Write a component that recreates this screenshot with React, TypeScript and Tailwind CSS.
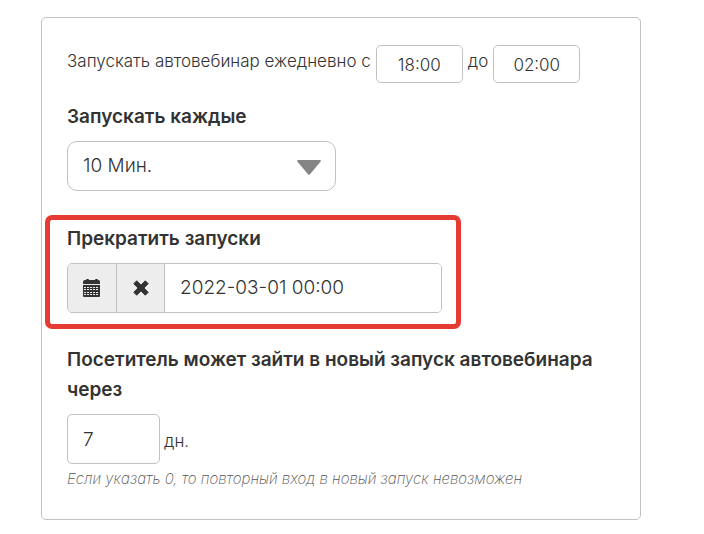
import { useState } from "react";

interface TimeInputProps {
  label: string;
  value: string;
  onChange: (value: string) => void;
}

function TimeInput({ label, value, onChange }: TimeInputProps) {
  return (
    <input
      type="text"
      aria-label={label}
      value={value}
      onChange={(e) => onChange(e.target.value)}
      className="h-[38px] w-[87px] rounded-[5px] border border-[#c1c1c1] bg-white pt-0.5 text-center text-[17px] font-light outline-none"
    />
  );
}

function CalendarIcon() {
  return (
    <svg width="18" height="18" viewBox="0 0 18 18" aria-hidden="true">
      <path
        fill="#333"
        d="M0 5V3Q0 1 2 1H3Q3 0 4 0H5Q6 0 6 1H12Q12 0 13 0H14Q15 0 15 1H15.5Q17 1 17 3V5Z"
      />
      <path fill="#333" d="M0 6H17V17Q17 18 16 18H1Q0 18 0 17Z" />
      <path
        stroke="#ededed"
        strokeDasharray="2 1"
        d="M1 8.5H16M1 10.5H16M1 13.5H16M1 15.5H16"
      />
    </svg>
  );
}

function RemoveIcon() {
  return (
    <svg width="16" height="16" viewBox="0 0 16 16" aria-hidden="true">
      <path
        fill="#333"
        stroke="#333"
        strokeLinejoin="round"
        d="M3.7.8 8 5.1 12.3.8 15.2 3.7 10.9 8 15.2 12.3 12.3 15.2 8 10.9 3.7 15.2.8 12.3 5.1 8 .8 3.7Z"
      />
    </svg>
  );
}

export default function App() {
  const [from, setFrom] = useState("18:00");
  const [to, setTo] = useState("02:00");
  const [interval, setInterval] = useState("10");
  const [stopDate, setStopDate] = useState("2022-03-01 00:00");
  const [days, setDays] = useState("7");

  return (
    <main className="bg-white pt-[17px] pr-[63px] pb-3 pl-[41px] font-['Inter','Noto_Sans',sans-serif] text-[#333]">
      <form className="rounded-[5px] border border-[#c1c1c1] px-[25px] pt-[27px] pb-7">
        <div className="flex items-start gap-[5px] text-[17px] leading-8 font-light">
          <span>Запускать автовебинар ежедневно с</span>
          <TimeInput label="Время начала" value={from} onChange={setFrom} />
          <span>до</span>
          <TimeInput label="Время окончания" value={to} onChange={setTo} />
        </div>

        <div className="mt-[19px]">
          <label
            htmlFor="interval"
            className="block text-[19px] leading-[30px] font-semibold"
          >
            Запускать каждые
          </label>
          <div className="relative mt-[9px] w-[269px]">
            <select
              id="interval"
              value={interval}
              onChange={(e) => setInterval(e.target.value)}
              className="block h-[50px] w-full appearance-none rounded-[10px] border border-[#c1c1c1] bg-white px-[15px] text-[19px] font-light outline-none"
            >
              <option value="10">10 Мин.</option>
              <option value="30">30 Мин.</option>
              <option value="60">60 Мин.</option>
            </select>
            <svg
              width="24"
              height="15"
              viewBox="0 0 24 15"
              aria-hidden="true"
              className="pointer-events-none absolute top-[19px] right-[15px]"
            >
              <path
                fill="#848484"
                d="M1.2 0H22.8Q24.5 .3 23.5 1.8L13 14.3Q12 15.3 11 14.3L.5 1.8Q-.5 .3 1.2 0Z"
              />
            </svg>
          </div>
        </div>

        {/* highlighted block, hangs over the card padding */}
        <div className="mt-6 -ml-[22px] w-[416px] rounded-[7px] border-5 border-[#e63b32] pt-1 pr-3.5 pb-[11px] pl-[17px]">
          <label
            htmlFor="stop-date"
            className="block text-[19px] leading-[30px] font-semibold"
          >
            Прекратить запуски
          </label>
          <div className="mt-[9px] flex h-[50px] overflow-hidden rounded-[5px] border border-[#c1c1c1]">
            <button
              type="button"
              aria-label="Выбрать дату"
              className="flex w-[49px] items-center justify-center border-r border-[#c1c1c1] bg-[#ededed]"
            >
              <CalendarIcon />
            </button>
            <button
              type="button"
              aria-label="Очистить"
              onClick={() => setStopDate("")}
              className="flex w-12 items-center justify-center border-r border-[#c1c1c1] bg-[#ededed]"
            >
              <RemoveIcon />
            </button>
            <input
              id="stop-date"
              type="text"
              value={stopDate}
              onChange={(e) => setStopDate(e.target.value)}
              className="min-w-0 flex-1 bg-white px-[15px] text-[19px] font-light outline-none"
            />
          </div>
        </div>

        <div className="mt-4">
          <label
            htmlFor="days"
            className="block text-[19px] leading-[30px] font-semibold"
          >
            Посетитель может зайти в новый запуск автовебинара через
          </label>
          <div className="mt-[9px] flex items-end gap-1">
            <input
              id="days"
              type="text"
              value={days}
              onChange={(e) => setDays(e.target.value)}
              className="h-[50px] w-[93px] rounded-[5px] border border-[#c1c1c1] bg-white px-[15px] text-[19px] font-light outline-none"
            />
            <span className="pb-[9px] text-[17px] leading-7 font-light">дн.</span>
          </div>
          <p className="mt-[3px] text-[15px] leading-6 font-extralight text-[#555] italic">
            Если указать 0, то повторный вход в новый запуск невозможен
          </p>
        </div>
      </form>
    </main>
  );
}
